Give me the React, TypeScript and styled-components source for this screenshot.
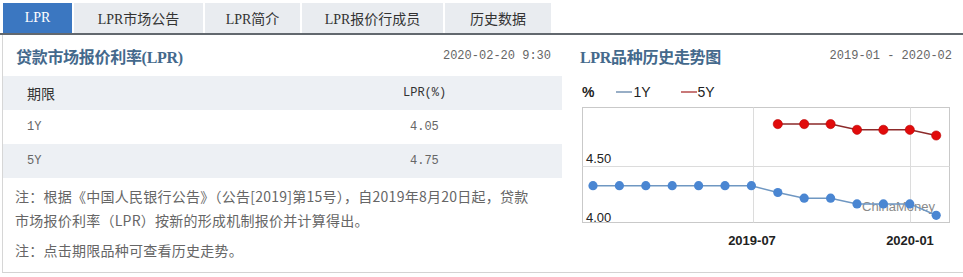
import React from "react"
import styled, { createGlobalStyle } from "styled-components"

const GlobalStyle = createGlobalStyle`
  body {
    margin: 0;
    background: #fff;
    font-family: "Noto Sans CJK SC", sans-serif;
  }
`

const tabs = [
  { label: "LPR", width: 69 },
  { label: "LPR市场公告", width: 129 },
  { label: "LPR简介", width: 95 },
  { label: "LPR报价行成员", width: 141 },
  { label: "历史数据", width: 106 },
]

const oneY = [4.31, 4.31, 4.31, 4.31, 4.31, 4.31, 4.31, 4.25, 4.2, 4.2, 4.15, 4.15, 4.15, 4.05]
const fiveY = [4.85, 4.85, 4.85, 4.8, 4.8, 4.8, 4.75]

const Page = styled.div`
  width: 963px;
`

const TabBar = styled.div`
  display: flex;
  gap: 2px;
  height: 30px;
  padding: 3px 0 0 3px;
  border-bottom: 2px solid #62686e;
`

const Tab = styled.div<{ $active?: boolean; $w: number }>`
  width: ${p => p.$w}px;
  display: flex;
  align-items: center;
  justify-content: center;
  background: ${p => (p.$active ? "#3b77c1" : "#e9ecf0")};
  color: ${p => (p.$active ? "#fff" : "#333")};
  font-family: "Liberation Serif", "Noto Sans CJK SC", serif;
  font-size: 14px;
`

const Main = styled.div`
  display: flex;
  gap: 6px;
  margin-left: 2px;
  border-left: 1px solid #d6d6d6;
  border-bottom: 1px solid #d3d3d3;
`

const LeftPanel = styled.div`
  width: 559px;
`

const RightPanel = styled.div`
  flex: 1;
`

const PanelHead = styled.div<{ $pl: number }>`
  height: 41px;
  display: flex;
  align-items: center;
  justify-content: space-between;
  padding: 0 11px 0 ${p => p.$pl}px;
`

const Title = styled.div`
  font-family: "Liberation Serif", "Noto Sans CJK SC", serif;
  font-weight: bold;
  font-size: 16px;
  color: #44698c;
  letter-spacing: -0.3px;
`

const Stamp = styled.div`
  font-family: "Liberation Mono", monospace;
  font-size: 12px;
  color: #666;
`

const Row = styled.div<{ $shade?: boolean }>`
  height: 34px;
  display: grid;
  grid-template-columns: 376px 1fr;
  align-items: center;
  background: ${p => (p.$shade ? "#edf0f4" : "#fff")};
  padding-left: 24px;
  color: #666;
`

const HeadCell = styled.div<{ $mono?: boolean }>`
  font-size: ${p => (p.$mono ? "12px" : "14px")};
  font-family: ${p => (p.$mono ? '"Liberation Mono", monospace' : '"Noto Sans CJK SC", sans-serif')};
  color: #333;
`

const Cell = styled.div<{ $value?: boolean }>`
  font-family: "Liberation Mono", monospace;
  font-size: 12px;
  color: #666;
  padding-left: ${p => (p.$value ? "7px" : "0")};
`

const Notes = styled.div`
  padding: 6px 10px 10px 12px;
  font-size: 14px;
  line-height: 24px;
  letter-spacing: 0.25px;
  color: #666;
`

const Note = styled.p`
  margin: 0 0 6px;
  &:last-child {
    margin-bottom: 0;
  }
`

const Legend = styled.div`
  display: flex;
  align-items: center;
  height: 27px;
  margin-top: 2px;
  padding-left: 14px;
  font-family: "Liberation Sans", Arial, sans-serif;
  font-size: 14px;
  color: #222;
`

const Percent = styled.span`
  font-weight: bold;
  margin-right: 22px;
`

const LegendItem = styled.span<{ $color: string }>`
  display: flex;
  align-items: center;
  margin-right: 30px;
  &::before {
    content: "";
    width: 16px;
    height: 2px;
    background: ${p => p.$color};
    margin-right: 1px;
  }
`

const ChartWrap = styled.div`
  margin-left: 12px;
  height: 145px;
  svg {
    display: block;
  }
`

const px = (i: number) => 13 + i * 26.4
const py = (v: number) => 116 - (v - 4) * 114

const Chart = () => {
  const blue = oneY.map((v, i) => [px(i), py(v)])
  const red = fiveY.map((v, i) => [px(i + 7), py(v)])
  const line = (pts: number[][]) => pts.map(p => p.join(",")).join(" ")
  return (
    <svg width="375" height="145" viewBox="0 0 375 145">
      <rect x="2.5" y="2.5" width="367" height="115" fill="#fff" stroke="#c9c9c9" />
      <line x1="2.5" y1="61.5" x2="369.5" y2="61.5" stroke="#dcdcdc" />
      <line x1="173.5" y1="2.5" x2="173.5" y2="117.5" stroke="#dcdcdc" />
      <line x1="330.5" y1="2.5" x2="330.5" y2="117.5" stroke="#dcdcdc" />
      <g fontFamily="Liberation Sans, Arial, sans-serif" fontSize="13" fill="#222">
        <text x="6" y="58">4.50</text>
        <text x="6" y="117">4.00</text>
      </g>
      <text x="282" y="106" fontFamily="Liberation Sans, Arial, sans-serif" fontSize="13" fill="#8a8a8a">
        ChinaMoney
      </text>
      <polyline points={line(blue)} fill="none" stroke="#6f97c2" strokeWidth="1.5" />
      {blue.map(([x, y], i) => (
        <circle key={"b" + i} cx={x} cy={y} r="4.6" fill="#4a86d2" />
      ))}
      <polyline points={line(red)} fill="none" stroke="#8c2a2a" strokeWidth="1.5" />
      {red.map(([x, y], i) => (
        <circle key={"r" + i} cx={x} cy={y} r="4.6" fill="#e10b0b" stroke="#b00" strokeWidth="0.6" />
      ))}
      <g fontFamily="Liberation Sans, Arial, sans-serif" fontSize="13" fontWeight="bold" fill="#222" textAnchor="middle">
        <text x="172" y="140">2019-07</text>
        <text x="330" y="140">2020-01</text>
      </g>
    </svg>
  )
}

export default function App() {
  return (
    <Page>
      <GlobalStyle />
      <TabBar>
        {tabs.map((t, i) => (
          <Tab key={t.label} $w={t.width} $active={i === 0}>
            {t.label}
          </Tab>
        ))}
      </TabBar>
      <Main>
        <LeftPanel>
          <PanelHead $pl={13}>
            <Title>贷款市场报价利率(LPR)</Title>
            <Stamp>2020-02-20 9:30</Stamp>
          </PanelHead>
          <Row $shade>
            <HeadCell>期限</HeadCell>
            <HeadCell $mono>LPR(%)</HeadCell>
          </Row>
          <Row>
            <Cell>1Y</Cell>
            <Cell $value>4.05</Cell>
          </Row>
          <Row $shade>
            <Cell>5Y</Cell>
            <Cell $value>4.75</Cell>
          </Row>
          <Notes>
            <Note>
              注：根据《中国人民银行公告》（公告[2019]第15号），自2019年8月20日起，贷款
              <br />
              市场报价利率（LPR）按新的形成机制报价并计算得出。
            </Note>
            <Note>注：点击期限品种可查看历史走势。</Note>
          </Notes>
        </LeftPanel>
        <RightPanel>
          <PanelHead $pl={12}>
            <Title>LPR品种历史走势图</Title>
            <Stamp>2019-01 - 2020-02</Stamp>
          </PanelHead>
          <Legend>
            <Percent>%</Percent>
            <LegendItem $color="#98aec6">1Y</LegendItem>
            <LegendItem $color="#c87878">5Y</LegendItem>
          </Legend>
          <ChartWrap>
            <Chart />
          </ChartWrap>
        </RightPanel>
      </Main>
    </Page>
  )
}
